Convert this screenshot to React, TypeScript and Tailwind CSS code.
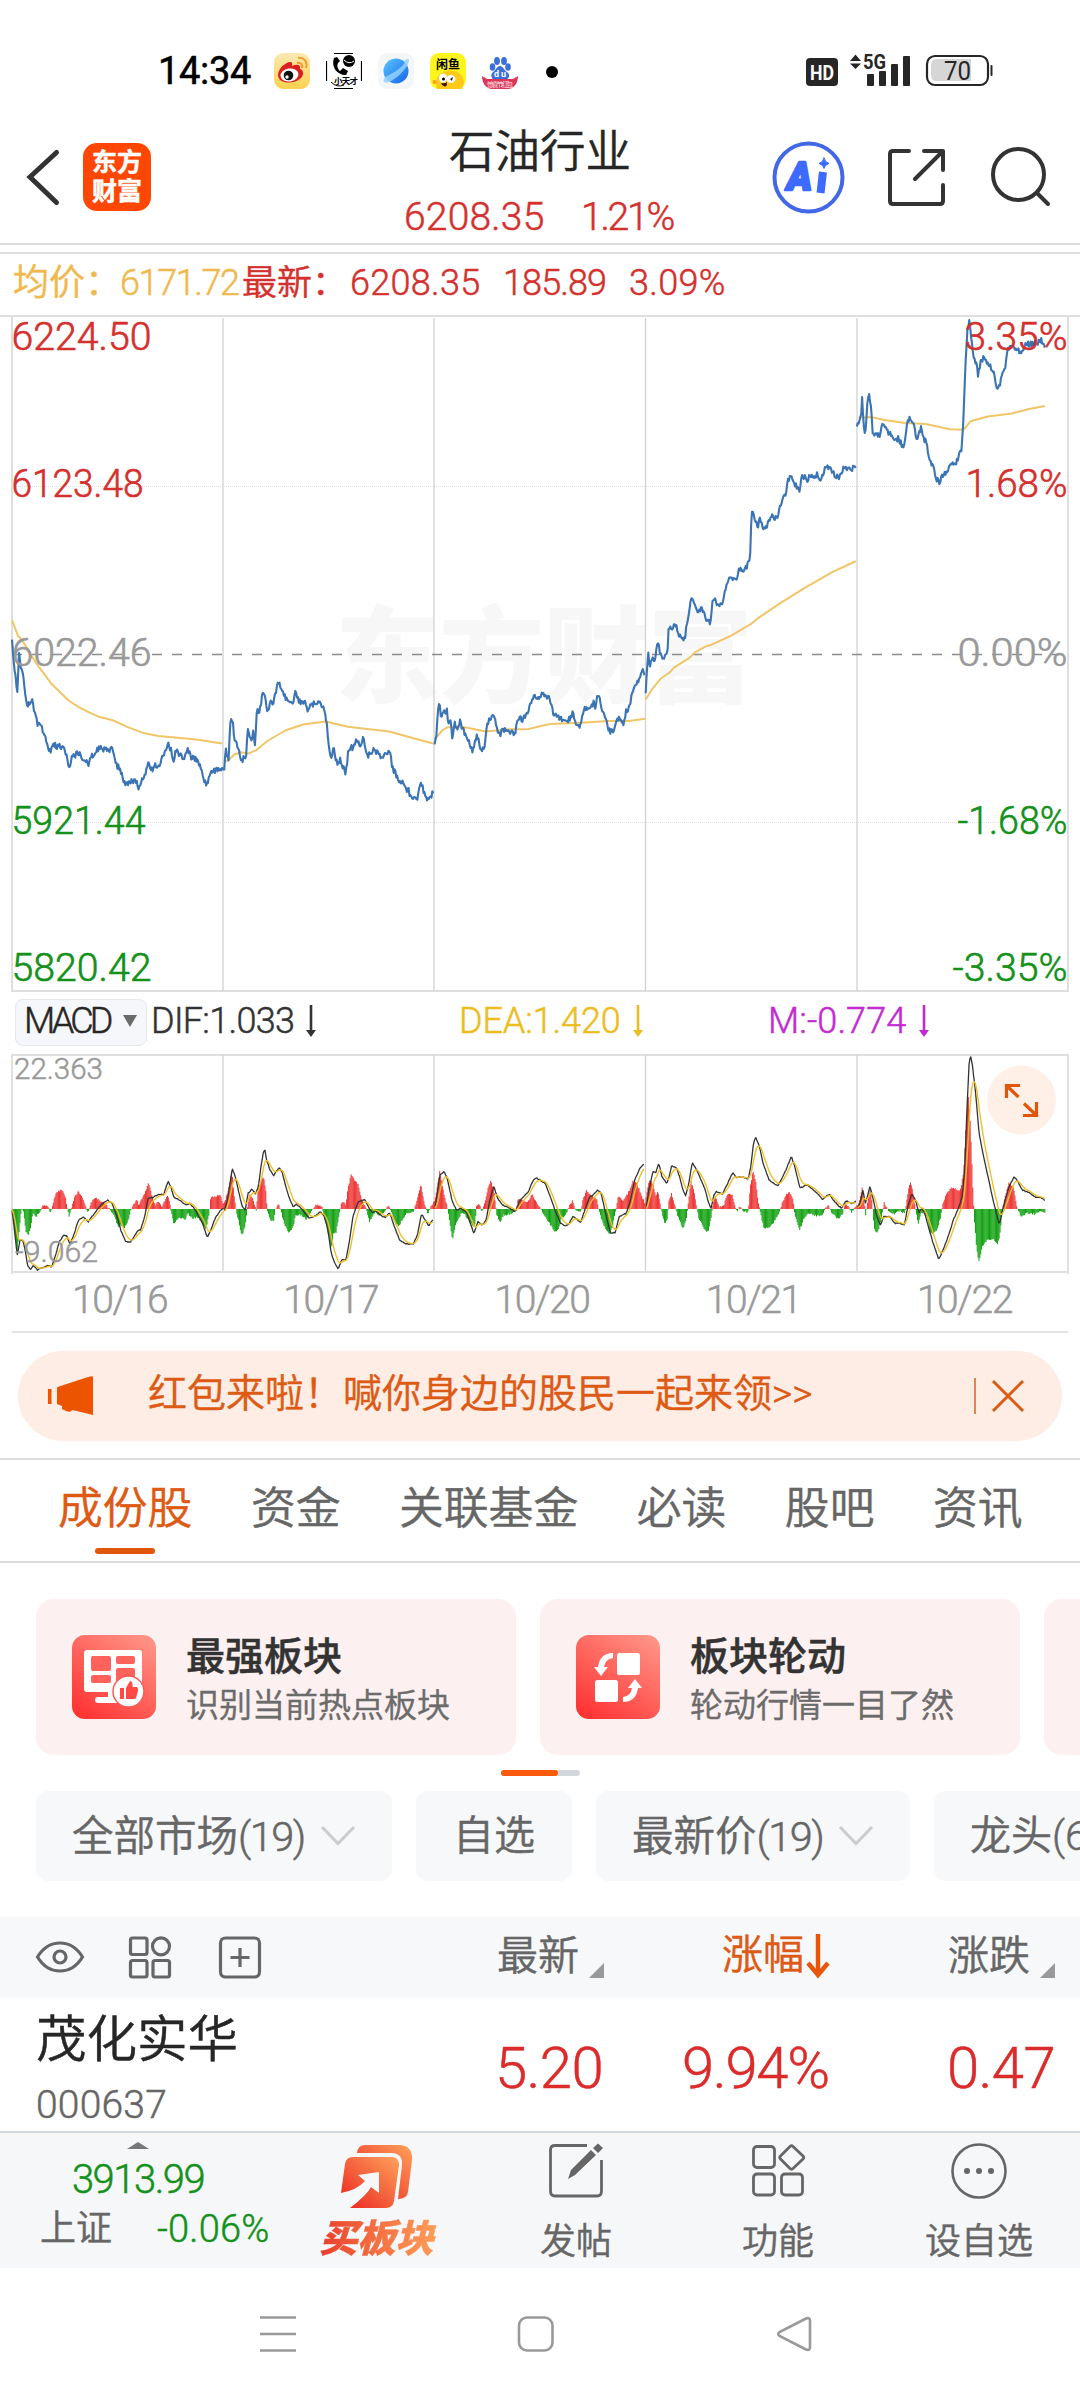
import React from 'react';

type Point = [number, number];

const HALF = 1568;

const parse = (src: string, dx = 0): Point[] =>
  src.trim().split(/\s+/).map(p => {
    const [x, y] = p.split(',').map(Number);
    return [x + dx, y];
  });

const noise = (i: number) => {
  const v = Math.sin(i * 12.9898) * 43758.5453;
  return (v - Math.floor(v)) * 2 - 1;
};

// one sample per minute, linear between the key points
const STEP = 2.55;
const resample = (pts: Point[], jitter = 0): Point[] => {
  const out: Point[] = [];
  let k = 0;
  const end = pts[pts.length - 1][0];
  for (let x = pts[0][0], i = 0; x <= end; x += STEP, i++) {
    while (k < pts.length - 2 && pts[k + 1][0] < x) k++;
    const [x0, y0] = pts[k];
    const [x1, y1] = pts[k + 1];
    out.push([x, y0 + ((y1 - y0) * (x - x0)) / (x1 - x0) + noise(x + i) * jitter]);
  }
  return out;
};

const toPath = (pts: Point[]) => 'M' + pts.map(p => `${p[0].toFixed(1)} ${p[1].toFixed(1)}`).join('L');

const ema = (pts: Point[], alpha: number): Point[] => {
  let y = pts[0][1];
  return pts.map(p => {
    y += (p[1] - y) * alpha;
    return [p[0], y];
  });
};

const PRICE: Point[][] = [
  parse('35,748 40,805 45,825 50,872 55,780 60,815 66,820 72,865 76,893 88,900 94,884 98,905 107,937 117,945 130,962 136,985 146,1008 155,990 185,992 192,1010 201,1040 210,1015 232,1005 240,1018 256,1032 268,1012 282,998 300,997 308,990 314,1005 322,995 332,1012 340,1035 352,1050 358,1076 370,1078 380,1070 398,1075 403,1093 410,1068 420,1058 430,1028 440,1045 452,1035 468,1028 475,1008 486,986 496,998 504,1028 510,1000 520,1012 535,1020 545,998 556,1018 575,1022 585,1045 592,1070 602,1076 612,1046 625,1050 635,1038 650,1048'),
  parse('651,1053 655,1000 664,1018 669,935 676,937 681,975 692,992 700,1024 714,1015 720,948 730,985 734,955 740,985 746,912 755,908 763,865 770,875 776,918 784,893 795,890 803,858 811,848 820,870 833,885 849,900 859,865 868,888 884,890 892,907 905,898 918,892 937,900 948,935 954,985 960,1018 970,995 980,1040 988,1022 1004,1056 1012,1000 1030,990 1036,976 1048,988 1054,972 1068,1015 1085,995 1100,1010 1114,1018 1122,1003 1132,1008 1140,1040 1155,1065 1170,1075 1180,1092 1186,1082 1190,1105 1200,1114 1205,1100 1212,1108 1222,1070 1230,1095 1240,1116 1250,1105 1258,1096'),
  [
    ...parse('1262,985 1268,960 1271,915 1276,895 1281,930 1286,905 1292,920 1298,910 1302,945 1308,925 1314,978 1320,940 1330,948 1336,932 1345,955 1355,965 1365,990 1373,1003 1385,965 1397,998 1408,990 1413,950 1420,930 1434,920 1440,945 1450,968 1460,952 1480,958 1497,964 1502,930 1520,930 1532,915 1540,892 1550,880 1568,878'),
    ...parse('14,872 28,884 38,912 50,925 62,928 72,935 88,930 94,915 104,940 117,946 130,905 145,900 155,893 160,905 165,882 174,884 180,912 192,928 198,955 210,960 218,945 228,926 243,944 250,910 262,903 266,870 275,855 292,838 296,818 304,824', HALF),
  ],
  parse('307,868 311,820 315,772 318,818 325,790 332,800 342,748 350,785 362,792 370,780 374,722 385,722 395,718 404,742 420,750 428,705 435,675 438,652 448,672 460,685 474,680 482,708 495,708 500,665 508,652 516,675 533,658 540,628 556,604 568,615 578,590 590,590 605,577 611,548 614,455 620,470 632,492 640,475 648,495 660,488 674,470 690,472 700,440 706,422 714,418 720,385 729,378 738,395 754,412 760,382 770,378 778,388 785,370 792,385 805,375 818,385 826,362 838,358 850,372 865,380 875,378 881,350 895,365 905,362 917,352', HALF),
  parse('920,268 928,255 932,245 935,192 941,275 946,270 951,210 956,192 962,230 966,288 975,282 988,285 992,255 998,252 1005,275 1018,278 1030,300 1040,292 1050,305 1058,312 1064,270 1070,250 1078,245 1085,260 1096,296 1106,268 1112,285 1122,305 1134,345 1142,352 1152,385 1160,390 1165,378 1180,370 1192,355 1205,350 1218,330 1225,315 1230,230 1236,120 1241,40 1247,25 1252,70 1260,108 1270,130 1272,147 1280,115 1290,108 1300,118 1312,135 1320,152 1325,180 1331,180 1338,158 1352,130 1357,95 1370,75 1380,88 1396,98 1406,82 1420,78 1440,76 1455,70 1466,80', HALF),
];

const AVERAGE: Point[][] = [
  parse('35,705 52,740 66,752 88,782 110,808 150,850 200,888 230,903 260,915 290,925 330,933 375,949 420,962 460,968 500,971 570,976 645,985'),
  parse('650,1028 665,1022 680,1010 700,1005 720,1008 745,1000 775,980 830,955 880,942 945,935 1010,947 1130,958 1190,971 1258,985'),
  [
    ...parse('1262,975 1285,955 1300,948 1350,948 1410,958 1480,953 1530,953 1568,946'),
    ...parse('30,941 120,938 200,934 260,934 305,929', HALF),
  ],
  parse('307,885 325,862 350,838 375,825 390,812 435,790 450,778 480,765 500,760 550,742 612,714 630,702 700,665 770,631 850,595 917,571', HALF),
  parse('925,245 960,243 1000,250 1060,257 1120,259 1190,271 1230,272 1250,253 1300,242 1370,235 1420,225 1466,218', HALF),
];

const DIF: Point[][] = [
  parse('35,660 42,720 50,795 58,752 66,750 72,775 80,825 88,840 97,826 108,840 125,832 140,826 150,832 160,800 172,755 185,735 194,738 203,762 212,742 228,690 242,680 256,696 268,678 285,655 298,640 312,630 325,640 340,680 352,725 365,755 378,757 390,740 400,722 408,720 420,680 430,625 445,622 460,612 475,615 482,590 488,574 496,590 505,622 520,630 540,645 552,640 570,665 588,700 602,742 612,720 625,685 640,660 650,656'),
  parse('652,662 660,630 668,580 674,536 682,555 692,600 702,645 712,662 720,610 732,598 742,612 750,590 758,530 764,490 769,480 774,510 784,540 795,557 804,540 812,533 820,550 830,590 842,630 852,652 860,642 875,655 888,672 898,685 912,680 930,665 942,680 952,720 962,790 972,820 982,838 992,810 1005,808 1015,750 1025,680 1040,635 1058,628 1070,650 1082,670 1090,660 1105,675 1118,682 1132,668 1145,710 1160,750 1180,762 1200,762 1212,735 1224,672 1235,690 1245,708 1258,686'),
  [
    ...parse('1263,655 1270,610 1277,555 1290,545 1300,570 1312,630 1325,660 1340,655 1355,668 1366,700 1376,730 1388,695 1400,705 1412,690 1422,630 1434,590 1445,625 1460,645 1480,655 1497,665 1508,635 1525,615 1535,605 1545,578 1555,563 1568,570'),
    ...parse('15,580 30,620 45,665 60,700 75,708 85,700 95,680 105,685 118,698 130,660 145,620 160,610 168,600 178,610 190,670 205,730 218,728 230,680 250,670 262,635 275,570 290,535 304,520', HALF),
  ],
  parse('308,655 316,600 328,545 336,548 345,520 354,560 368,580 375,560 382,528 396,532 405,560 415,600 423,618 432,580 442,518 455,540 468,570 480,600 490,640 497,655 505,615 512,605 530,612 545,580 560,547 570,562 585,560 605,566 612,530 620,460 626,442 636,465 648,520 665,570 690,588 705,560 718,530 730,500 740,530 755,595 775,585 800,605 820,628 840,612 855,635 875,655 888,632 905,640 918,634', HALF),
  parse('922,652 930,640 937,600 945,640 958,590 968,630 978,680 988,706 998,680 1015,680 1030,700 1045,700 1058,706 1068,650 1079,612 1090,630 1100,668 1110,655 1120,680 1130,720 1145,770 1158,808 1170,780 1185,740 1200,690 1215,655 1226,620 1233,540 1240,350 1246,220 1250,195 1256,230 1264,300 1275,430 1290,510 1305,580 1320,650 1334,704 1345,650 1362,590 1376,560 1388,575 1400,600 1420,608 1440,622 1458,624 1467,634', HALF),
];

const HISTOGRAM: Point[] = [
  ...parse('35,0 42,-60 50,-137 56,-60 62,0 68,-5 75,-65 82,-80 90,-50 95,-12 105,-22 118,-5 122,8 138,10 147,-10 152,10 160,40 170,55 182,55 190,35 195,5 201,-24 208,5 216,35 227,53 236,38 248,10 256,-12 264,20 278,32 290,26 305,15 318,0 330,-15 342,-52 352,-48 362,-55 372,-35 380,-3 388,15 398,30 402,12 415,35 424,55 431,80 440,45 450,12 460,20 470,8 480,25 488,42 496,0 505,-47 515,-28 525,-25 538,-32 545,-12 558,-28 572,-25 585,-38 598,-62 608,-10 612,35 625,38 640,40 648,15 655,30 664,60 673,115 680,40 685,0 692,-30 702,-82 712,-50 718,0 725,48 736,25 744,-8 749,60 765,98 772,55 776,-5 784,-32 795,-35 800,0 809,14 816,-5 825,-45 838,-68 850,-58 858,-22 868,-15 878,-22 890,-30 905,-5 918,15 935,5 942,-25 952,-65 962,-120 968,-75 976,-70 986,-10 992,20 998,22 1004,10 1010,60 1020,105 1030,85 1040,75 1050,30 1062,5 1073,-38 1082,-18 1092,-8 1100,-22 1118,-8 1128,14 1136,-8 1150,-50 1160,-48 1172,-25 1182,-12 1200,-10 1206,8 1215,45 1222,75 1232,20 1242,-18 1252,10 1260,20 1268,55 1277,112 1286,60 1298,10 1306,-40 1314,-92 1324,-45 1332,-30 1340,-12 1350,-18 1365,-38 1378,-55 1384,10 1390,18 1400,-10 1408,20 1418,65 1425,85 1435,50 1442,-15 1452,-38 1462,-18 1480,-15 1498,-8 1504,30 1520,25 1532,20 1545,45 1555,25 1568,5'),
  ...parse('10,-15 25,-40 42,-65 52,-65 62,-30 75,-15 84,5 94,25 105,-5 118,-10 124,25 135,55 150,40 165,28 175,-20 190,-60 202,-78 212,-45 220,-5 228,40 240,25 255,45 270,85 280,80 295,40 305,15 310,50 318,88 328,75 336,38 343,52 350,10 362,-45 370,-30 374,25 382,45 392,10 400,-20 415,-60 425,-30 430,10 438,82 446,60 455,5 462,-30 478,-60 488,-70 497,-25 503,20 510,35 522,5 535,15 545,45 558,42 566,8 572,-8 580,8 590,-5 605,-10 610,60 618,115 626,85 633,25 640,-10 650,-58 668,-55 682,-35 695,-10 704,20 715,42 725,52 735,25 740,-15 754,-65 765,-30 780,-12 800,-20 820,-18 830,5 838,12 845,-8 865,-30 880,-12 886,18 895,8 905,-10 915,5 922,10 930,35 936,70 942,20 946,-22 951,20 958,60 965,15 970,-55 978,-75 990,-40 996,0 999,20 1005,8 1015,-8 1030,-15 1045,-5 1058,-12 1064,15 1070,60 1076,80 1085,40 1092,-10 1098,-45 1106,-15 1115,-8 1125,-30 1135,-75 1152,-65 1163,-25 1170,15 1182,50 1195,65 1208,60 1220,55 1230,110 1237,250 1243,350 1250,250 1256,80 1261,-30 1267,-110 1274,-160 1285,-110 1300,-90 1318,-92 1328,-105 1335,-80 1342,-15 1350,35 1362,80 1375,65 1385,5 1398,-25 1415,-12 1435,-15 1455,-8 1468,-12', HALF),
];

const bars = resample(HISTOGRAM, 3);
const barPath = (sign: number) =>
  bars.filter(b => b[1] * sign > 0).map(([x, v]) => `M${x.toFixed(1)} 657V${(657 - v).toFixed(1)}`).join('');

const DAY_LINES = [223, 434, 645.5, 857];

const AXIS = [
  { y: 350, left: '6224.50', lw: 140, right: '3.35%', rw: 103, color: '#d4302d' },
  { y: 497, left: '6123.48', lw: 132, right: '1.68%', rw: 102, color: '#d4302d' },
  { y: 665.5, left: '6022.46', lw: 140, right: '0.00%', rw: 110, color: '#999999' },
  { y: 834, left: '5921.44', lw: 134, right: '-1.68%', rw: 110, color: '#14911a' },
  { y: 981, left: '5820.42', lw: 140, right: '-3.35%', rw: 115, color: '#14911a' },
];

function StatusBar() {
  return (
    <div className="flex h-[110px] items-start pt-[53px] pl-[158px] text-black">
      <div className="w-[116px] text-[38px] leading-[36px] font-[450] tracking-[-0.3px]">14:34</div>
      <div className="flex gap-4">
        {/* weibo */}
        <svg width="36" height="36" viewBox="0 0 36 36">
          <defs>
            <linearGradient id="wb" x1="0" y1="0" x2="0" y2="1">
              <stop offset="0" stopColor="#fbe9b4" />
              <stop offset="1" stopColor="#fdd24d" />
            </linearGradient>
          </defs>
          <rect width="36" height="36" rx="9" fill="url(#wb)" />
          <path d="M4 22C4 15 13 8 17 9C19 10 18 12 18 13C22 11 27 11 26 16C30 17 30 22 27 25C20 32 4 31 4 22Z" fill="#dc2020" />
          <ellipse cx="15.500" cy="22" rx="9" ry="6.500" fill="#fff" transform="rotate(-8 15.500 22)" />
          <circle cx="14.500" cy="22.500" r="4.800" fill="#111" />
          <circle cx="13" cy="24" r="1.700" fill="#fff" />
          <path d="M23 10C27 9 29 12 28 15M24 5C30 4 34 9 32 15" fill="none" stroke="#ee9d2b" strokeWidth="2" />
        </svg>
        {/* phone watch */}
        <svg width="36" height="36" viewBox="0 0 36 36">
          <path d="M8 .5H27M8 35.500H27M.5 8V28M35.500 8V28" stroke="#000" strokeWidth="1.200" />
          <circle cx="23" cy="8" r="6" />
          <path d="M18 7Q23 12 28 8" fill="none" stroke="#fff" />
          <path d="M8 5C5 14 11 22 20 22L22 18L17 15L14 18C11 15 11 12 12 10L14 8L11 4Z" />
          <text x="8" y="31" fontSize="8.500" fontWeight="700" textLength="24">小天才</text>
          <path d="M5 29Q11 35 18 32" fill="none" stroke="#000" />
        </svg>
        {/* browser */}
        <svg width="36" height="36" viewBox="0 0 36 36">
          <defs>
            <linearGradient id="br" x1="0" y1="0" x2="1" y2="1">
              <stop offset="0" stopColor="#5cc6ff" />
              <stop offset="1" stopColor="#1463e8" />
            </linearGradient>
          </defs>
          <rect width="36" height="36" rx="9" fill="#f4f6f8" />
          <circle cx="18" cy="18" r="12.500" fill="url(#br)" />
          <path d="M7 24C3 30 8 32 16 26C24 21 31 12 31 7C31 5 28 6 26 8C29 9 22 17 7 24Z" fill="#8fd2ff" opacity=".85" />
        </svg>
        {/* xianyu */}
        <svg width="36" height="36" viewBox="0 0 36 36">
          <rect width="36" height="36" rx="9" fill="#fdf51b" />
          <text x="6" y="16" fontSize="12" fontWeight="700" textLength="24">闲鱼</text>
          <path d="M7 36C4 28 8 19 17 18C26 16 34 21 34 30L32 36Z" fill="#ffc917" />
          <ellipse cx="13" cy="25" rx="4" ry="4.500" fill="#fff" />
          <ellipse cx="21" cy="26" rx="4.500" ry="4" fill="#fff" />
          <circle cx="13.500" cy="26" r="1.500" />
          <path d="M20 26L23 24L22 28M11 30Q15 31 17 29Q17 35 14 33Q12 33 11 30Z" fill="#3a1208" />
          <circle cx="4.500" cy="29" r="2" fill="#ff9c1a" />
        </svg>
        {/* baidu */}
        <svg width="36" height="36" viewBox="0 0 36 36">
          <g fill="#3b6fd9">
            <ellipse cx="10.500" cy="14" rx="2.800" ry="3.800" />
            <ellipse cx="15" cy="8" rx="2.900" ry="4" />
            <ellipse cx="22" cy="8" rx="2.900" ry="4" />
            <ellipse cx="26" cy="14" rx="2.800" ry="3.800" />
            <path d="M18 13C21 13 22 17 25 19C29 22 27 27 22 27H14C9 27 8 22 11 19C14 17 15 13 18 13Z" />
          </g>
          <text x="12" y="24" fontSize="9" fontWeight="700" fill="#fff" textLength="12">du</text>
          <path d="M0 23L5 26H31L36 23C36 31 31 36 26 36H10C5 36 0 31 0 23Z" fill="#dc3558" />
          <text x="5" y="34" fontSize="6.500" fill="#fff" textLength="26">惊喜节红包</text>
        </svg>
      </div>
      <svg className="ml-[28px]" width="12" height="36" viewBox="0 0 12 36">
        <circle cx="6" cy="19" r="6" />
      </svg>
      <svg className="ml-[248px] overflow-visible" width="190" height="40" viewBox="806 53 190 40" fill="#262626">
        <rect x="806" y="58" width="32" height="28" rx="4" />
        <text x="810" y="80" fontSize="21" fontWeight="700" fill="#fff" textLength="24" lengthAdjust="spacingAndGlyphs">HD</text>
        <path d="M850 61L855.500 54.500L861 61ZM850 63.500H861L855.500 69Z" />
        <text x="863" y="69" fontSize="20.500" fontWeight="700" textLength="23" lengthAdjust="spacingAndGlyphs">5G</text>
        <rect x="867" y="74" width="7" height="12" rx="1" />
        <rect x="879" y="71" width="7" height="15" rx="1" />
        <rect x="891" y="64" width="7" height="22" rx="1" />
        <rect x="903" y="56" width="7" height="30" rx="1" />
        <rect x="927" y="56" width="61" height="29" rx="8" fill="#fff" stroke="#262626" strokeWidth="2.200" />
        <path d="M937 59H971V81H937Q931 81 931 75V65Q931 59 937 59Z" fill="#d6d6d6" />
        <rect x="990.500" y="65" width="2" height="11" rx="1" />
        <text x="944" y="79.500" fontSize="25" fontWeight="400" textLength="27" lengthAdjust="spacingAndGlyphs">70</text>
      </svg>
    </div>
  );
}

function Header() {
  return (
    <div className="flex h-[135px] border-b-2 border-[#dadada]">
      <svg className="mt-[36px] ml-[25px]" width="36" height="62" viewBox="25 146 36 62" fill="none">
        <path d="M56.500 152.500L30 177L56.500 202.500" stroke="#333" strokeWidth="5" strokeLinecap="round" />
      </svg>
      <div className="mt-[33px] ml-[22px] flex h-[68px] w-[68px] flex-col items-center justify-center rounded-[14px] bg-[#ff4602] text-[25px] leading-[29px] font-bold text-white">
        <span>东方</span>
        <span>财富</span>
      </div>
      <div className="ml-[229px] flex w-[320px] flex-col items-center">
        <div className="mt-[19px] text-[45.500px] leading-[48px] text-[#262626]">石油行业</div>
        <div className="mt-[20px] flex w-full pl-[24px] text-[39px] leading-[40px] text-[#d4302d]">
          <span className="w-[177px] tracking-[0.2px]">6208.35</span>
          <span className="tracking-[-2.200px]">1.21%</span>
        </div>
      </div>
      <svg className="ml-[68px]" width="300" height="130" viewBox="768 110 300 130" fill="none" stroke="#333" strokeWidth="4" strokeLinecap="round" strokeLinejoin="round">
        <circle cx="808.500" cy="177.500" r="34" stroke="#4268e8" />
        <text x="787" y="189.500" fontSize="39" fontWeight="900" fontStyle="italic" fill="#3d6bff" stroke="#3d6bff" strokeWidth="2.500" textLength="25" lengthAdjust="spacingAndGlyphs">A</text>
        <path d="M822.500 176L821 189" stroke="#3d6bff" strokeWidth="8" strokeLinecap="square" />
        <path d="M824 158Q825 162.500 829 163.500Q825 164.500 824 168.500Q823 164.500 819 163.500Q823 162.500 824 158Z" fill="#3d6bff" stroke="#3d6bff" strokeWidth="1" />
        <path d="M909 151H893Q890 151 890 154V201Q890 204 893 204H940Q943 204 943 201V185M924 151H943V170M915 179L942 152" />
        <circle cx="1018.500" cy="174.500" r="25.500" />
        <path d="M1037 193L1048 204" />
      </svg>
    </div>
  );
}

function PriceInfo() {
  return (
    <div className="mt-[7px] flex h-[65px] items-center border-y-2 border-[#dedede] pb-[3px] pl-[13px] text-[36px] text-[#d4302d]">
      <span className="w-[107px] text-[#f0b94e]">均价：</span>
      <span className="w-[122px] tracking-[-1.400px] text-[#f0b94e]">6171.72</span>
      <span className="w-[108px] text-[35px]">最新：</span>
      <span className="w-[153px] tracking-[0.3px]">6208.35</span>
      <span className="w-[126px] tracking-[-0.900px]">185.89</span>
      <span className="tracking-[0.3px]">3.09%</span>
    </div>
  );
}

function PriceChart() {
  return (
    <svg className="block shrink-0 overflow-visible" width="1080" height="675" viewBox="0 317 1080 675" fill="none">
      <text x="335" y="694" fontSize="105" fontWeight="900" fill="#f7f7f7" textLength="418">东方财富</text>
      <path d="M12 486.500H1068M12 822.500H1068" stroke="#dedede" strokeDasharray="1 1" />
      <path d="M12 317V991H1068V317" stroke="#dfdfdf" strokeWidth="2" />
      {DAY_LINES.map(x => <path key={x} d={`M${x} 318V991`} stroke="#d2d2d2" strokeWidth="1.300" />)}
      <path d="M12 654.500H1068" stroke="#8c8c8c" strokeWidth="1.600" strokeDasharray="10 10" />
      <g transform="translate(0 310) scale(.34439 .44005)" strokeLinejoin="round">
        {AVERAGE.map((d, i) => (
          <path key={i} d={toPath(d)} stroke="#f1c568" strokeWidth="2" vectorEffect="non-scaling-stroke" />
        ))}
        {PRICE.map((d, i) => (
          <path key={i} d={toPath(resample(d, 7))} stroke="#3b74b4" strokeWidth="2.100" vectorEffect="non-scaling-stroke" />
        ))}
      </g>
      {AXIS.map(a => (
        <g key={a.y} fill={a.color} stroke={a.color} strokeWidth="0.6" fontSize="38">
          <text x="11.500" y={a.y} textLength={a.lw} lengthAdjust="spacingAndGlyphs">{a.left}</text>
          <text x={1067.5 - a.rw} y={a.y} textLength={a.rw} lengthAdjust="spacingAndGlyphs">{a.right}</text>
        </g>
      ))}
    </svg>
  );
}

function DownArrow() {
  return (
    <svg width="12" height="32" viewBox="0 0 12 32">
      <path d="M4.700 0H7.300V25H11L6 32L1 25H4.700Z" fill="currentColor" />
    </svg>
  );
}

function MacdBar() {
  return (
    <div className="flex h-[62px] items-center pb-[4px] pl-[15px] text-[36px]">
      <div className="mt-[2px] flex h-[47px] w-[132px] items-center rounded-lg border border-[#e6e8eb] bg-[#f6f7fa] pb-[2px] pl-[8px] text-[#262626]">
        <span className="w-[99px] tracking-[-3.800px]">MACD</span>
        <svg width="14" height="12" viewBox="0 0 14 12">
          <path d="M0 0H14L7 12Z" fill="#6b6b6b" />
        </svg>
      </div>
      <div className="flex w-[310px] items-center pl-1 text-[#333]">
        <span className="w-[154px] tracking-[-0.700px]">DIF:1.033</span>
        <DownArrow />
      </div>
      <div className="flex w-[311px] items-center pl-[2px] text-[#edbd20]">
        <span className="w-[173px] tracking-[-0.100px]">DEA:1.420</span>
        <DownArrow />
      </div>
      <div className="flex items-center text-[#c32ad0]">
        <span className="w-[150px] tracking-[0.1px]">M:-0.774</span>
        <DownArrow />
      </div>
    </div>
  );
}

function MacdChart() {
  return (
    <svg className="block shrink-0" width="1080" height="220" viewBox="0 1054 1080 220" fill="none">
      <path d="M12 1274V1055H1068V1274" stroke="#e0e0e0" strokeWidth="2" />
      {DAY_LINES.map(x => <path key={x} d={`M${x} 1055V1272`} stroke="#d2d2d2" strokeWidth="1.300" />)}
      <path d="M11 1272H1069" stroke="#e0e0e0" strokeWidth="2" />
      <g transform="translate(0 990) scale(.34439 .33333)" strokeLinejoin="round">
        <path d={barPath(1)} stroke="#ee3333" strokeWidth="1" vectorEffect="non-scaling-stroke" />
        <path d={barPath(-1)} stroke="#10a010" strokeWidth="1" vectorEffect="non-scaling-stroke" />
        {DIF.map((d, i) => {
          const line = resample(d, 1.5);
          return (
            <g key={i}>
              <path d={toPath(line)} stroke="#333" strokeWidth="1.300" vectorEffect="non-scaling-stroke" />
              <path d={toPath(ema(line, 0.22))} stroke="#efc02c" strokeWidth="1.400" vectorEffect="non-scaling-stroke" />
            </g>
          );
        })}
      </g>
      <g fill="#999" stroke="#999" strokeWidth="0.5" fontSize="30">
        <text x="14" y="1079" textLength="89" lengthAdjust="spacingAndGlyphs">22.363</text>
        <text x="15" y="1262" textLength="83" lengthAdjust="spacingAndGlyphs">-9.062</text>
      </g>
      <circle cx="1021.500" cy="1100" r="34.500" fill="#feefe7" />
      <path d="M1006.500 1098V1085.500H1020M1007 1086L1018.500 1097M1036.500 1102V1115.500H1023M1024 1103.500L1036 1115" stroke="#e2560c" strokeWidth="3.200" />
    </svg>
  );
}

function Dates() {
  return (
    <div className="mx-3 flex h-[59px] items-center border-b-2 border-[#e4e4e4] pb-[5px] text-[39px] tracking-[-1.400px] text-[#999]">
      {['10/16', '10/17', '10/20', '10/21', '10/22'].map(d => (
        <span key={d} className="flex-1 pl-1 text-center">{d}</span>
      ))}
    </div>
  );
}

function Banner() {
  return (
    <div className="mx-[18px] mt-[18px] flex h-[90px] shrink-0 items-center rounded-full bg-[#fdede4] text-[39px] text-[#dd5a14]">
      <svg className="ml-[29px]" width="48" height="42" viewBox="0 0 48 42" fill="#ec5402">
        <rect x="1" y="14" width="3.500" height="15" />
        <path d="M10 13Q10 12 12 11.500L38 3Q46 0 46 2V40L38 38L25 35Q24 38 19 36L15 34V31L10 29Z" />
      </svg>
      <div className="mb-[3px] ml-[53px] w-[826px]">{'红包来啦！喊你身边的股民一起来领>>'}</div>
      <div className="h-9 w-[2px] bg-[#e0854f]" />
      <svg className="ml-[15px]" width="34" height="34" viewBox="0 0 34 34">
        <path d="M2 2L32 32M32 2L2 32" stroke="#dd5a14" strokeWidth="3" />
      </svg>
    </div>
  );
}

function Tabs() {
  return (
    <div className="mt-[17px] flex h-[105px] shrink-0 gap-[58.500px] border-y-2 border-[#dcdcdc] pt-[24px] pl-[58px] text-[44.800px] leading-[50px] text-[#666]">
      <div className="flex flex-col items-center text-[#dd5a14]">
        成份股
        <div className="mt-[14px] h-[6px] w-[60px] rounded-full bg-[#e2560c]" />
      </div>
      {['资金', '关联基金', '必读', '股吧', '资讯'].map(t => <div key={t}>{t}</div>)}
    </div>
  );
}

function FeatureCards() {
  return (
    <div className="mt-[36px] flex h-[156px] shrink-0 gap-6 pl-9">
      <svg width="0" height="0" className="absolute">
        <defs>
          <linearGradient id="tile" x1=".1" y1="1" x2=".8" y2="0">
            <stop offset="0" stopColor="#ff3030" />
            <stop offset="1" stopColor="#ff9184" />
          </linearGradient>
        </defs>
      </svg>
      <div className="flex w-[480px] shrink-0 rounded-[18px] bg-[#fdf0f0] pt-9 pl-9">
        <svg className="shrink-0" width="84" height="84" viewBox="0 0 84 84">
          <rect width="84" height="84" rx="13" fill="url(#tile)" />
          <rect x="12" y="15" width="58" height="42" rx="3" fill="#fff" />
          <g fill="#ff625b">
            <rect x="19" y="21" width="20" height="15" rx="2" />
            <rect x="19" y="40" width="20" height="8" rx="2" />
            <rect x="44" y="21" width="19" height="8" rx="2" />
            <rect x="44" y="33" width="19" height="15" rx="2" />
          </g>
          <path d="M36 54V62H26Q23 62 23 65Q23 68 26 68H50V54Z" fill="#fff" />
          <circle cx="56.500" cy="56.500" r="15.500" fill="#fff" stroke="#ff5a54" strokeWidth="1.500" />
          <path d="M48 53H52V64H48ZM54 53L58 46Q61 46 60.500 52H65Q66.500 53 66 56L64 63Q63.500 64 62 64H54Z" fill="#ff4a46" />
        </svg>
        <div className="ml-[30px]">
          <div className="mt-[1px] text-[39px] leading-[42px] font-medium text-[#333]">最强板块</div>
          <div className="mt-[8px] text-[33px] leading-[40px] text-[#6b6b6b]">识别当前热点板块</div>
        </div>
      </div>
      <div className="flex w-[480px] shrink-0 rounded-[18px] bg-[#fdf0f0] pt-9 pl-9">
        <svg className="shrink-0" width="84" height="84" viewBox="0 0 84 84" fill="#fff">
          <rect width="84" height="84" rx="13" fill="url(#tile)" />
          <rect x="41" y="18" width="23" height="22" rx="2.500" />
          <rect x="19" y="45" width="23" height="22" rx="2.500" />
          <path d="M37 18V23Q29 24 28 32H32L25 41L18 32H22Q24 18 37 18Z" />
          <path d="M47 67V62Q55 61 56 53H52L59 44L66 53H62Q60 67 47 67Z" />
        </svg>
        <div className="ml-[30px]">
          <div className="mt-[1px] text-[39px] leading-[42px] font-medium text-[#333]">板块轮动</div>
          <div className="mt-[8px] text-[33px] leading-[40px] text-[#6b6b6b]">轮动行情一目了然</div>
        </div>
      </div>
      <div className="w-[480px] shrink-0 rounded-[18px] bg-[#fdf0f0]" />
    </div>
  );
}

function Chevron() {
  return (
    <svg width="36" height="22" viewBox="0 0 36 22">
      <path d="M2 2L18 18.500L34 2" fill="none" stroke="#ccc" strokeWidth="3" />
    </svg>
  );
}

function Filters() {
  return (
    <div className="mt-[15px] flex h-[90px] w-[1300px] shrink-0 gap-6 pl-9 text-[41px] text-[#666]">
      <div className="flex w-[356px] items-center rounded-xl bg-[#f7f8fa] pl-9">
        <span className="mt-[1px] w-[248px] text-[41.500px]">全部市场<span className="tracking-[-1.500px]">(19)</span></span>
        <Chevron />
      </div>
      <div className="flex w-[156px] items-center justify-center rounded-xl bg-[#f7f8fa]">自选</div>
      <div className="flex w-[314px] items-center rounded-xl bg-[#f7f8fa] pl-9">
        <span className="mt-[1px] w-[206px] text-[41.500px]">最新价<span className="tracking-[-1.500px]">(19)</span></span>
        <Chevron />
      </div>
      <div className="flex w-[300px] items-center rounded-xl bg-[#f7f8fa] pl-9">龙头(6)</div>
    </div>
  );
}

function CornerMark() {
  return (
    <svg className="mt-[27px] ml-[10px]" width="15" height="15" viewBox="0 0 15 15">
      <path d="M15 0V15H0Z" fill="#999" />
    </svg>
  );
}

function TableHeader() {
  return (
    <div className="mt-9 flex h-[81px] shrink-0 items-center bg-[#f7f8fa] text-[41px] text-[#666]">
      <svg className="ml-[34px]" width="240" height="46" viewBox="34 1935 240 46" fill="none" stroke="#666" strokeWidth="3.200">
        <path d="M37.500 1957Q46 1943 60 1943Q74 1943 82.500 1957Q74 1971 60 1971Q46 1971 37.500 1957Z" />
        <circle cx="60" cy="1957" r="6" />
        <rect x="130.500" y="1938" width="16.500" height="16.500" rx="2" />
        <circle cx="161" cy="1946.300" r="8.500" />
        <rect x="130.500" y="1960.500" width="16.500" height="16.500" rx="2" />
        <rect x="153" y="1960.500" width="16.500" height="16.500" rx="2" />
        <rect x="220.500" y="1938" width="39" height="39" rx="5" />
        <path d="M240 1948V1967M230.500 1957.500H249.500" />
      </svg>
      <div className="mb-[1px] ml-[223px] flex w-[225px]">最新<CornerMark /></div>
      <div className="flex w-[226px] text-[#dd5a14]">
        涨幅
        <svg className="mt-[-1px] ml-[2px]" width="24" height="46" viewBox="0 0 24 46" fill="none" stroke="#e8560c" strokeWidth="4.500">
          <path d="M12 0V40M2 29L12 41L22 29" />
        </svg>
      </div>
      <div className="mb-[1px] flex">涨跌<CornerMark /></div>
    </div>
  );
}

function StockRow() {
  return (
    <div className="flex h-[133px] shrink-0 items-center text-[58px] tracking-[-0.600px] text-[#db2b2b]">
      <div className="flex w-[495px] flex-col pl-9 tracking-normal">
        <div className="mt-[7px] text-[50.500px] leading-[56px] text-[#262626]">茂化实华</div>
        <div className="mt-[17px] text-[39px] leading-[40px] tracking-[0.2px] text-[#666]">000637</div>
      </div>
      <div className="mt-[6px] w-[187px]">5.20</div>
      <div className="mt-[6px] w-[265px] tracking-[-1.300px]">9.94%</div>
      <div className="mt-[6px]">0.47</div>
    </div>
  );
}

function BottomBar() {
  return (
    <div className="flex h-[137px] shrink-0 border-t-2 border-[#d5dade] bg-[#f6f7f9] text-[36px] text-[#666]">
      <div className="flex w-[276px] flex-col items-center">
        <svg className="mt-[9px]" width="22" height="7" viewBox="0 0 22 7">
          <path d="M0 7L11 0L22 7Z" fill="#777" />
        </svg>
        <div className="mt-[12px] text-[40px] leading-[38px] tracking-[-1.500px] text-[#14911a]">3913.99</div>
        <div className="mt-[11px] flex w-full items-center pl-[40px]">
          <span className="w-[117px]">上证</span>
          <span className="text-[38px] tracking-[0.2px] text-[#14911a]">-0.06%</span>
        </div>
      </div>
      <div className="flex w-[201px] flex-col items-center">
        <svg className="mt-[11px]" width="72" height="65" viewBox="341 2144 72 65">
          <defs>
            <linearGradient id="buy" x1="0" y1="1" x2="1" y2="0">
              <stop offset=".1" stopColor="#ec2f25" />
              <stop offset="1" stopColor="#ffa25b" />
            </linearGradient>
          </defs>
          <g fill="url(#buy)">
            <path d="M357 2153Q358 2145 365 2145H400Q413 2146 412 2160L408 2192Q407 2199 398 2199L402 2165Q403 2153 391 2153Z" />
            <path d="M345 2164Q346 2157 353 2157H392Q399 2157 399 2165L394 2201Q393 2208 386 2208H350Q367 2195 371 2187L379 2193V2172L358 2175L365 2181Q357 2190 341 2193Z" />
          </g>
        </svg>
        <div className="mt-[10px] bg-gradient-to-r from-[#e8352a] to-[#ff9d58] bg-clip-text px-1 text-[38px] leading-[40px] font-black text-transparent italic">买板块</div>
      </div>
      <div className="flex w-[198px] flex-col items-center">
        <svg className="mt-[10px]" width="56" height="56" viewBox="549 2144 56 56" fill="none" stroke="#666" strokeWidth="2.800">
          <path d="M588 2146.500H556Q551.500 2146.500 551.500 2151V2192Q551.500 2197 556 2197H598Q602.500 2197 602.500 2192V2161" />
          <path d="M569 2180L572 2171L592 2151L597 2156L576 2176ZM594 2149L599 2144.500L604 2149L599 2154Z" fill="#666" stroke="none" />
        </svg>
        <div className="mt-[25px]">发帖</div>
      </div>
      <div className="flex w-[206px] flex-col items-center">
        <svg className="mt-[10px]" width="56" height="56" viewBox="750 2144 56 56" fill="none" stroke="#666" strokeWidth="2.800">
          <rect x="753.500" y="2147.500" width="21" height="21" rx="3.500" />
          <rect x="753.500" y="2175" width="21" height="21" rx="3.500" />
          <rect x="781.500" y="2175" width="21" height="21" rx="3.500" />
          <path d="M790 2147.500Q791.500 2146 793 2147.500L803 2157Q804.500 2158.500 803 2160L793 2169.500Q791.500 2171 790 2169.500L780.500 2160Q779 2158.500 780.500 2157Z" />
        </svg>
        <div className="mt-[25px]">功能</div>
      </div>
      <div className="flex w-[196px] flex-col items-center">
        <svg className="mt-[10px]" width="56" height="56" viewBox="0 0 56 56" fill="#666">
          <circle cx="28" cy="28" r="26.500" fill="none" stroke="#666" strokeWidth="2.600" />
          <circle cx="16" cy="28" r="3" />
          <circle cx="28" cy="28" r="3" />
          <circle cx="40" cy="28" r="3" />
        </svg>
        <div className="mt-[25px]">设自选</div>
      </div>
    </div>
  );
}

function SystemNav() {
  return (
    <div className="flex h-[131px] items-center pl-[260px]">
      <svg width="560" height="44" viewBox="260 2312 560 44" fill="none" stroke="#999" strokeWidth="2.600">
        <path d="M260 2317.500H296M260 2334H296M260 2350.500H296" />
        <rect x="519" y="2317.500" width="33.500" height="33" rx="8" />
        <path d="M806 2318.500L779.500 2332Q777 2334 779.500 2336L806 2349.500Q810 2351 810 2347V2321Q810 2317 806 2318.500Z" />
      </svg>
    </div>
  );
}

export default function App() {
  return (
    <div className="flex h-[2400px] w-[1080px] flex-col overflow-hidden bg-white font-[Roboto,'Noto_Sans_CJK_SC',sans-serif] leading-none font-[350] whitespace-nowrap [-webkit-text-stroke:0.5px]">
      <StatusBar />
      <Header />
      <PriceInfo />
      <PriceChart />
      <MacdBar />
      <MacdChart />
      <Dates />
      <Banner />
      <Tabs />
      <FeatureCards />
      <div className="mt-[15px] flex shrink-0 pl-[501px]">
        <div className="h-[6px] w-[79px] rounded-full bg-[#d3d7db]">
          <div className="h-[6px] w-[57px] rounded-full bg-[#fa5a0a]" />
        </div>
      </div>
      <Filters />
      <TableHeader />
      <StockRow />
      <BottomBar />
      <SystemNav />
    </div>
  );
}
